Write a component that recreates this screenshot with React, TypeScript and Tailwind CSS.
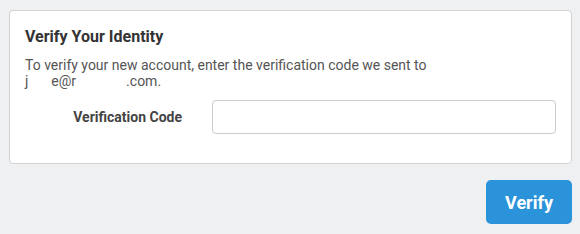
import React from 'react';

export default function App() {
  const [code, setCode] = React.useState('');

  return (
    <div
      className="w-[580px] h-[234px] bg-[#eff0f2] pt-[10px] pl-[9px] pr-[8px]"
      style={{ fontFamily: 'Roboto, "Liberation Sans", sans-serif' }}
    >
      <div className="h-[154px] rounded-[4px] border border-[#d3d3d3] bg-white px-[15px] pt-[16px]">
        <h2 className="text-[16px] font-bold leading-[20px] text-[#333]">
          Verify Your Identity
        </h2>
        <p className="mt-[10px] text-[14px] leading-[16px] text-[#555]">
          To verify your new account, enter the verification code we sent to
          <br />
          j<span className="inline-block w-[23px]" />
          e@r<span className="inline-block w-[50px]" />
          .com.
        </p>
        <div className="mt-[11px] flex items-center">
          <label className="w-[187px] pr-[30px] text-right text-[14px] font-bold text-[#444]">
            Verification Code
          </label>
          <input
            value={code}
            onChange={(e) => setCode(e.target.value)}
            className="h-[34px] w-[344px] rounded-[4px] border border-[#ccc] bg-white px-2 text-[14px] outline-none"
          />
        </div>
      </div>
      <div className="mt-[16px] flex justify-end">
        <button className="h-[44px] w-[86px] rounded-[5px] bg-[#2b93d9] text-[18px] font-bold text-white">
          Verify
        </button>
      </div>
    </div>
  );
}
